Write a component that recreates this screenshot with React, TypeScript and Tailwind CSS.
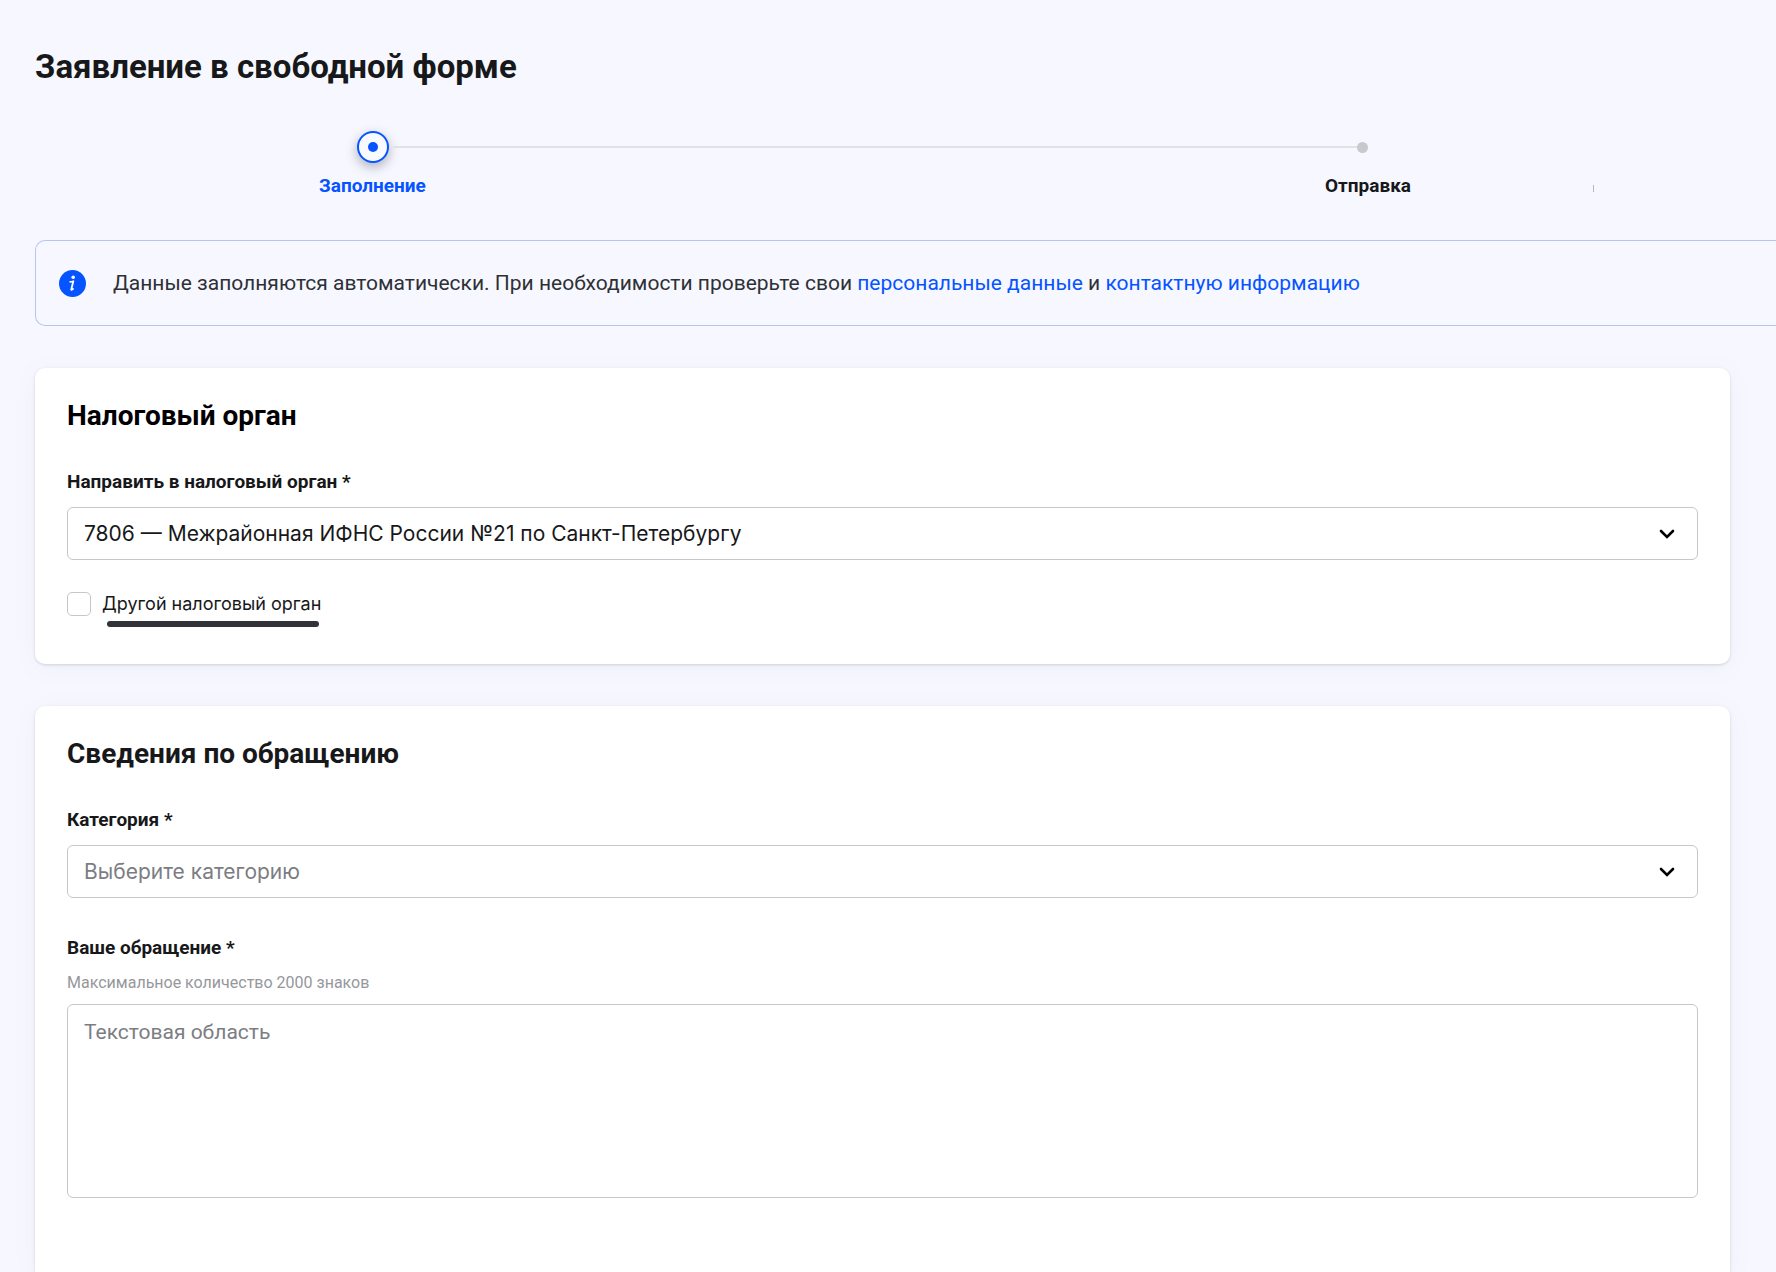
import type { ReactNode } from 'react'

const fieldClass = 'block w-full rounded-[6px] border border-[#c6c7ca] bg-white px-4 text-[21px] leading-[28px]'

function InfoIcon() {
  return (
    <svg className="size-[27px] shrink-0" viewBox="0 0 27 27" aria-hidden="true">
      <circle cx="13.5" cy="13.5" r="13.5" fill="#0554ff" />
      <circle cx="14.2" cy="7.2" r="1.8" fill="#fff" />
      <path
        d="M11.2 11.8c1.2 0 2.2-.2 3.1-.6l-2 8c-.2 1 .6.8 1.7-.3"
        fill="none"
        stroke="#fff"
        strokeWidth="1.8"
        strokeLinecap="round"
        strokeLinejoin="round"
      />
    </svg>
  )
}

function Chevron() {
  return (
    <svg
      className="pointer-events-none absolute right-[23px] top-1/2 h-[10px] w-[16px] -translate-y-1/2"
      viewBox="0 0 16 10"
      fill="none"
      aria-hidden="true"
    >
      <path d="m2 2 6 6 6-6" stroke="#000" strokeWidth="2.6" strokeLinecap="round" />
    </svg>
  )
}

function Label({ htmlFor, children }: { htmlFor: string; children: ReactNode }) {
  return (
    <label htmlFor={htmlFor} className="block text-[19px] font-bold leading-[24px]">
      {children}
    </label>
  )
}

function SelectField({
  id,
  label,
  value,
  placeholder = false,
}: {
  id: string
  label: string
  value: string
  placeholder?: boolean
}) {
  return (
    <div>
      <Label htmlFor={id}>{label}</Label>
      <div className="relative mt-[13px]">
        <select
          id={id}
          className={`${fieldClass} h-[53px] appearance-none font-['Inter','Roboto',sans-serif] ${placeholder ? 'text-[#7c7d83]' : 'text-[#17181a]'}`}
        >
          <option>{value}</option>
        </select>
        <Chevron />
      </div>
    </div>
  )
}

function Stepper() {
  return (
    <div className="mt-[43px]">
      {/* Track */}
      <div className="flex items-center pl-[19%] pr-[362px]">
        <span className="flex size-8 items-center justify-center rounded-full border-2 border-[#0554ff] bg-[#f8faff] shadow-[0_4px_12px_rgba(30,35,60,0.35)]">
          <span className="size-[10px] rounded-full bg-[#0554ff]" />
        </span>
        <span className="ml-1 h-[2px] flex-1 bg-[#e1e2e6]" />
        <span className="size-[11px] rounded-full bg-[#c8c9cd]" />
      </div>
      {/* Step names */}
      <div className="mt-[11px] flex items-center justify-between pl-[284px] pr-[136px] text-[19px] font-bold leading-[24px]">
        <span className="text-[#0554ff]">Заполнение</span>
        <span className="flex items-center gap-[182px]">
          Отправка
          <span className="mt-1 h-[7px] w-px bg-[#b5b6c0]" />
        </span>
      </div>
    </div>
  )
}

export default function App() {
  return (
    <div className="flex min-h-screen flex-col overflow-x-hidden bg-[#f7f8ff] pl-[35px] pr-[46px] pt-[46px] font-['Roboto',sans-serif] text-[#17181a]">
      <h1 className="text-[33px] font-bold leading-[42px]">Заявление в свободной форме</h1>

      <Stepper />

      <div className="-mr-[46px] mt-[42px] flex h-[86px] items-center gap-[27px] rounded-l-[10px] border border-r-0 border-[#b7c5ee] pl-[23px]">
        <InfoIcon />
        <p className="text-[21px] leading-[28px] text-[#2e3036]">
          Данные заполняются автоматически. При необходимости проверьте свои{' '}
          <a href="#personal" className="text-[#0554ff]">
            персональные данные
          </a>{' '}
          и{' '}
          <a href="#contacts" className="text-[#0554ff]">
            контактную информацию
          </a>
        </p>
      </div>

      <section className="mt-[42px] rounded-[10px] bg-white px-8 pb-12 pt-8 shadow-[0_1px_3px_rgba(40,40,70,0.16),0_4px_24px_rgba(60,60,120,0.06)]">
        <h2 className="mb-[38px] text-[28px] font-bold leading-[32px] text-black">Налоговый орган</h2>
        <SelectField
          id="tax-office"
          label="Направить в налоговый орган *"
          value="7806 — Межрайонная ИФНС России №21 по Санкт-Петербургу"
        />
        <div className="mt-8 flex items-center gap-[11px]">
          <input
            id="other-office"
            type="checkbox"
            className="size-6 appearance-none rounded-[5px] border border-[#c6c7ca] bg-white"
          />
          <label
            htmlFor="other-office"
            className="relative font-['Inter','Roboto',sans-serif] text-[18px] leading-[24px]"
          >
            Другой налоговый орган
            <span className="absolute left-[5px] top-[29px] h-[6px] w-[212px] rounded-full bg-[#323338]" />
          </label>
        </div>
      </section>

      <section className="mt-[42px] flex-1 rounded-t-[10px] bg-white px-8 pt-8 shadow-[0_1px_3px_rgba(40,40,70,0.16),0_4px_24px_rgba(60,60,120,0.06)]">
        <h2 className="mb-[38px] text-[28px] font-bold leading-[32px]">Сведения по обращению</h2>
        <SelectField id="category" label="Категория *" value="Выберите категорию" placeholder />
        <div className="mt-[38px]">
          <Label htmlFor="message">Ваше обращение *</Label>
          <p id="message-hint" className="mt-[13px] text-[16px] leading-[20px] text-[#96979b]">
            Максимальное количество 2000 знаков
          </p>
          <textarea
            id="message"
            aria-describedby="message-hint"
            placeholder="Текстовая область"
            className={`${fieldClass} mt-[11px] h-[194px] resize-none py-[13px] font-['Roboto',sans-serif] placeholder:text-[#7c7d83]`}
          />
        </div>
      </section>
    </div>
  )
}
